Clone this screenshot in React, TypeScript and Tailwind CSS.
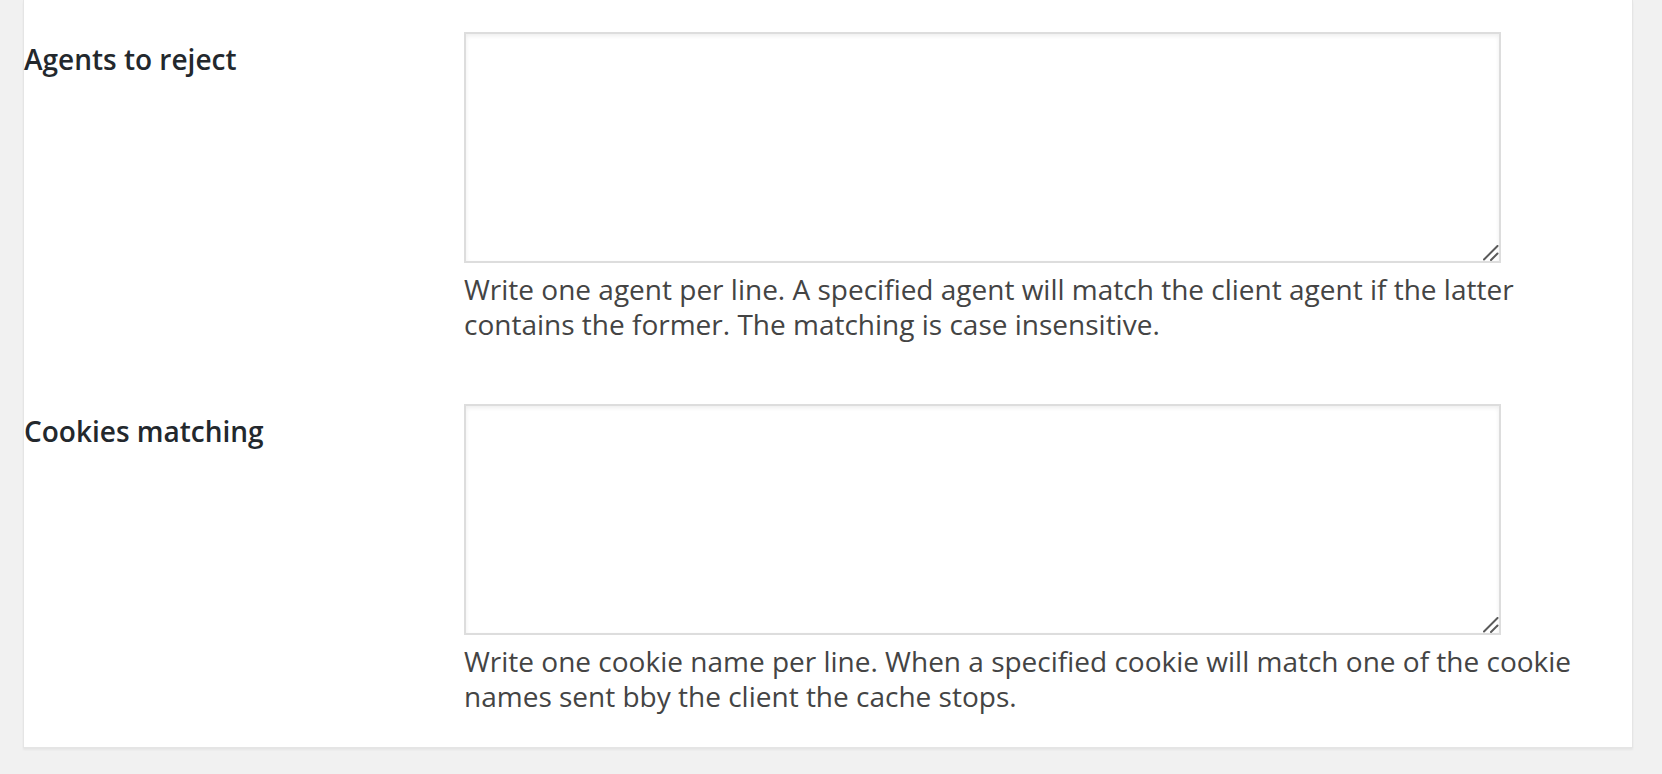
import React from 'react';

type Field = {
  id: string;
  label: string;
  help: string;
};

const fields: Field[] = [
  {
    id: 'reject_agents',
    label: 'Agents to reject',
    help: 'Write one agent per line. A specified agent will match the client agent if the latter contains the former. The matching is case insensitive.',
  },
  {
    id: 'reject_cookies',
    label: 'Cookies matching',
    help: 'Write one cookie name per line. When a specified cookie will match one of the cookie names sent bby the client the cache stops.',
  },
];

// the little grip in the corner of the box
const ResizeGrip: React.FC = () => (
  <svg
    className="pointer-events-none absolute right-[2px] bottom-[2px] h-[16px] w-[16px]"
    viewBox="0 0 16 16"
    fill="none"
  >
    <path d="M1 14.5L14.5 1" stroke="#5a5a5a" strokeWidth="2" strokeLinecap="round" />
    <path d="M8 15L14.5 8.5" stroke="#5a5a5a" strokeWidth="2" strokeLinecap="round" />
  </svg>
);

const App: React.FC = () => {
  return (
    <div className="h-screen overflow-hidden bg-[#f1f1f1] font-['Open_Sans',_'Liberation_Sans',_sans-serif]">
      <div className="ml-[23px] w-[1610px] border border-t-0 border-[#e5e5e5] bg-white pt-[2px] shadow-[0_2px_2px_rgba(0,0,0,0.05)]">
        {fields.map((field, i) => (
          <div key={field.id} className="flex">
            {/* Label column */}
            <div className="w-[420px] shrink-0 pt-[39px] pr-[20px]">
              <label
                htmlFor={field.id}
                className="block text-[28px] leading-[36px] font-semibold text-[#23282d]"
              >
                {field.label}
              </label>
            </div>

            {/* Field column */}
            <div className={`flex-1 px-[20px] pt-[30px] ${i === 0 ? 'pb-[32px]' : 'pb-[33px]'}`}>
              <div className="relative h-[231px] w-[1037px]">
                <textarea
                  id={field.id}
                  className="block h-full w-full resize-none border-2 border-[#dddddd] bg-white shadow-[inset_0_2px_4px_rgba(0,0,0,0.07)] outline-none"
                />
                <ResizeGrip />
              </div>
              <p className="mt-[9px] text-[28px] leading-[35px] text-[#444444]">{field.help}</p>
            </div>
          </div>
        ))}
      </div>
    </div>
  );
};

export default App;
